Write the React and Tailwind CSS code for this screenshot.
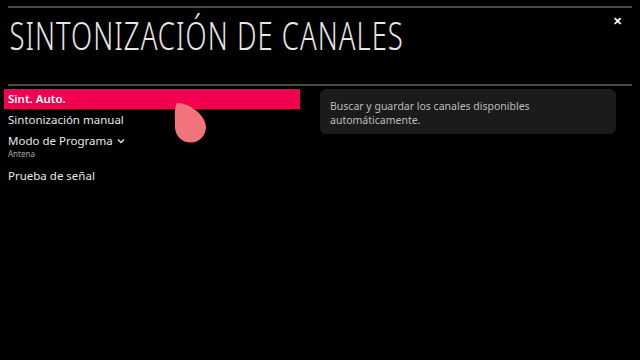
import React from 'react';

const menuItems = [
  { label: 'Sintonización manual' },
  { label: 'Modo de Programa', sub: 'Antena', chevron: true },
  { label: 'Prueba de señal' },
];

function Pointer() {
  return (
    <svg
      className="absolute left-[173px] top-[101px]"
      width="34"
      height="42"
      viewBox="0 0 34 42"
    >
      <path
        d="M4 2 C 14 1, 33 13, 33 26 A 15.5 15.5 0 0 1 2 26 C 2 17, 1 6, 4 2 Z"
        fill="#f3737b"
      />
    </svg>
  );
}

export default function App() {
  return (
    <div
      className="relative w-[640px] h-[360px] overflow-hidden bg-black text-white"
      style={{ fontFamily: '"Noto Sans", "Open Sans", sans-serif' }}
    >
      {/* Header */}
      <div className="px-2 pt-[6px]">
        <div className="h-[2px] w-[624px] bg-[#4a4a4a]" />
        <div className="flex items-start justify-between">
          <h1 className="origin-left scale-x-[0.703] whitespace-nowrap pl-[2px] pt-[4px] text-[39px] leading-[46px] font-light tracking-[1.5px] text-[#e6e6e6]">
            SINTONIZACIÓN DE CANALES
          </h1>
          <button className="mr-[10px] mt-[7px] text-[11px] font-bold leading-none text-white">✕</button>
        </div>
        <div className="mt-[26px] h-[2px] w-[624px] bg-[#4a4a4a]" />
      </div>

      {/* Body */}
      <div className="mt-[3px] flex">
        <div className="w-[300px] pl-[4px]">
          <div className="flex h-[20px] items-center bg-[#f0004f] pl-[4px] text-[11.5px] font-semibold">
            Sint. Auto.
          </div>
          <div className="flex flex-col pl-[4px] text-[11.5px] text-[#e8e8e8]">
            {menuItems.map((item) => (
              <div key={item.label} className="flex flex-col">
                <div className="flex h-[21px] items-center">
                  <span>{item.label}</span>
                  {item.chevron && (
                    <svg className="ml-[4px]" width="8" height="6" viewBox="0 0 8 6">
                      <path d="M1 1.5 L4 4.5 L7 1.5" fill="none" stroke="#e8e8e8" strokeWidth="1.3" />
                    </svg>
                  )}
                </div>
                {item.sub && (
                  <div className="-mt-[2px] mb-[6px] text-[8px] leading-[10px] text-[#a8a8a8]">{item.sub}</div>
                )}
              </div>
            ))}
          </div>
        </div>

        <div className="ml-[20px] h-[45px] w-[296px] rounded-[6px] bg-[#1b1b1b] px-[10px] pt-[10px] text-[10.5px] leading-[14px] text-[#bdbdbd]">
          Buscar y guardar los canales disponibles
          <br />
          automáticamente.
        </div>
      </div>

      <Pointer />
    </div>
  );
}
